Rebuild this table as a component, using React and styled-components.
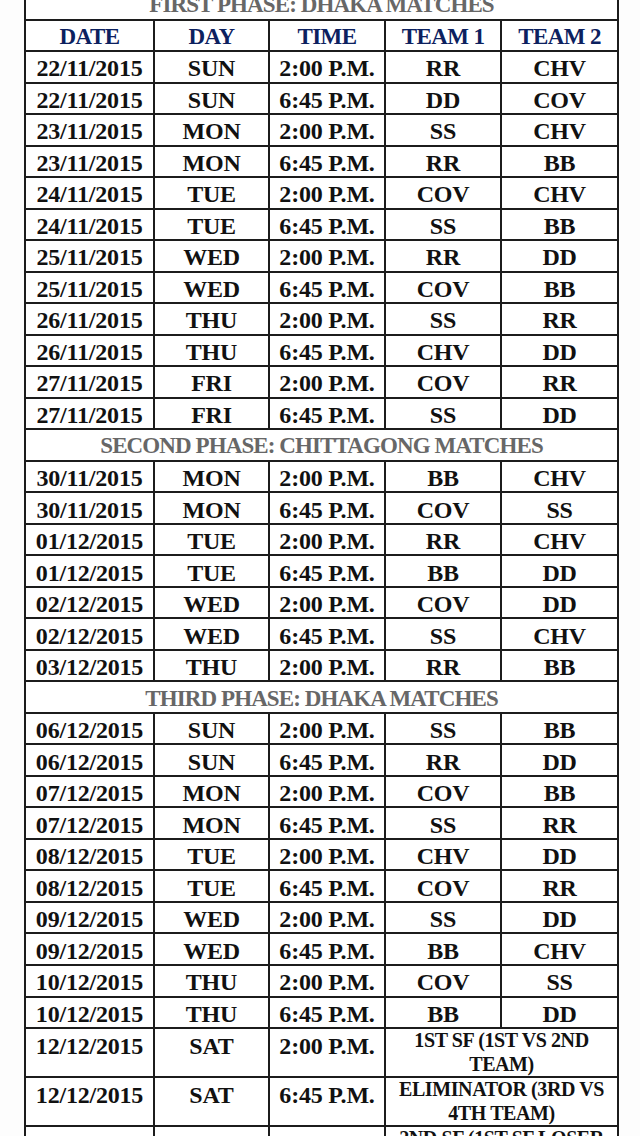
import React from "react";
import styled, { createGlobalStyle } from "styled-components";

const GlobalStyle = createGlobalStyle`
	html, body {
		margin: 0;
		padding: 0;
		background: #ffffff;
	}
	body {
		overflow: hidden;
		height: 1136px;
	}
`;

export const Page = styled.div`
	width: 640px;
	height: 1136px;
	overflow: hidden;
	background: #fdfdfd;
	padding-left: 24px;
	box-sizing: border-box;
`;

export const Schedule = styled.table`
	margin-top: -13px;
	width: 593px;
	table-layout: fixed;
	border-collapse: collapse;
	font-family: "Liberation Serif", "Times New Roman", serif;
	font-weight: 700;
	background: #ffffff;
`;

export const Row = styled.tr`
	height: ${(props) => (props.tall ? "49px" : "31.52px")};
`;

export const PhaseCell = styled.td`
	border: 2px solid #1c1c1c;
	text-align: center;
	color: #676767;
	font-size: 23px;
	line-height: 1;
	padding: 2px 0 0;
	letter-spacing: -0.9px;
	white-space: nowrap;
`;

export const HeadCell = styled.th`
	border: 2px solid #1c1c1c;
	text-align: center;
	color: #0c215f;
	font-size: 23px;
	line-height: 1;
	padding: 3px 0 0;
	font-weight: 700;
	letter-spacing: -0.6px;
`;

export const Cell = styled.td`
	border: 2px solid #1c1c1c;
	text-align: center;
	vertical-align: ${(props) => (props.top ? "top" : "middle")};
	color: #111111;
	font-size: 24px;
	line-height: 1;
	padding: ${(props) => (props.top ? "5px 0 0" : "3px 0 0")};
	letter-spacing: -0.2px;
	white-space: nowrap;
`;

export const FinalCell = styled.td`
	border: 2px solid #1c1c1c;
	text-align: center;
	vertical-align: top;
	color: #111111;
	font-size: 20px;
	line-height: 23.5px;
	padding: 0 8px;
	letter-spacing: -0.4px;
	overflow: hidden;
`;

const phases = [
	{
		title: "FIRST PHASE: DHAKA MATCHES",
		head: true,
		games: [
			["22/11/2015", "SUN", "2:00 P.M.", "RR", "CHV"],
			["22/11/2015", "SUN", "6:45 P.M.", "DD", "COV"],
			["23/11/2015", "MON", "2:00 P.M.", "SS", "CHV"],
			["23/11/2015", "MON", "6:45 P.M.", "RR", "BB"],
			["24/11/2015", "TUE", "2:00 P.M.", "COV", "CHV"],
			["24/11/2015", "TUE", "6:45 P.M.", "SS", "BB"],
			["25/11/2015", "WED", "2:00 P.M.", "RR", "DD"],
			["25/11/2015", "WED", "6:45 P.M.", "COV", "BB"],
			["26/11/2015", "THU", "2:00 P.M.", "SS", "RR"],
			["26/11/2015", "THU", "6:45 P.M.", "CHV", "DD"],
			["27/11/2015", "FRI", "2:00 P.M.", "COV", "RR"],
			["27/11/2015", "FRI", "6:45 P.M.", "SS", "DD"],
		],
	},
	{
		title: "SECOND PHASE: CHITTAGONG MATCHES",
		games: [
			["30/11/2015", "MON", "2:00 P.M.", "BB", "CHV"],
			["30/11/2015", "MON", "6:45 P.M.", "COV", "SS"],
			["01/12/2015", "TUE", "2:00 P.M.", "RR", "CHV"],
			["01/12/2015", "TUE", "6:45 P.M.", "BB", "DD"],
			["02/12/2015", "WED", "2:00 P.M.", "COV", "DD"],
			["02/12/2015", "WED", "6:45 P.M.", "SS", "CHV"],
			["03/12/2015", "THU", "2:00 P.M.", "RR", "BB"],
		],
	},
	{
		title: "THIRD PHASE: DHAKA MATCHES",
		games: [
			["06/12/2015", "SUN", "2:00 P.M.", "SS", "BB"],
			["06/12/2015", "SUN", "6:45 P.M.", "RR", "DD"],
			["07/12/2015", "MON", "2:00 P.M.", "COV", "BB"],
			["07/12/2015", "MON", "6:45 P.M.", "SS", "RR"],
			["08/12/2015", "TUE", "2:00 P.M.", "CHV", "DD"],
			["08/12/2015", "TUE", "6:45 P.M.", "COV", "RR"],
			["09/12/2015", "WED", "2:00 P.M.", "SS", "DD"],
			["09/12/2015", "WED", "6:45 P.M.", "BB", "CHV"],
			["10/12/2015", "THU", "2:00 P.M.", "COV", "SS"],
			["10/12/2015", "THU", "6:45 P.M.", "BB", "DD"],
			["12/12/2015", "SAT", "2:00 P.M.", "1ST SF (1ST VS 2ND TEAM)"],
			["12/12/2015", "SAT", "6:45 P.M.", "ELIMINATOR (3RD VS 4TH TEAM)"],
			["13/12/2015", "SUN", "6:45 P.M.", "2ND SF (1ST SF LOSER VS ELIMINATOR WINNER)"],
		],
	},
];

const columns = ["DATE", "DAY", "TIME", "TEAM 1", "TEAM 2"];

const App = () => {
	return (
		<Page>
			<GlobalStyle />
			<Schedule>
				<colgroup>
					<col style={{ width: "129px" }} />
					<col style={{ width: "115px" }} />
					<col style={{ width: "116px" }} />
					<col style={{ width: "116px" }} />
					<col style={{ width: "117px" }} />
				</colgroup>
				<tbody>
					{phases.map((phase) => (
						<React.Fragment key={phase.title}>
							<Row>
								<PhaseCell colSpan={5}>{phase.title}</PhaseCell>
							</Row>
							{phase.head && (
								<Row>
									{columns.map((c) => (
										<HeadCell key={c}>{c}</HeadCell>
									))}
								</Row>
							)}
							{phase.games.map((g, i) =>
								g.length === 4 ? (
									<Row tall key={i}>
										<Cell top>{g[0]}</Cell>
										<Cell top>{g[1]}</Cell>
										<Cell top>{g[2]}</Cell>
										<FinalCell colSpan={2}>{g[3]}</FinalCell>
									</Row>
								) : (
									<Row key={i}>
										{g.map((v, j) => (
											<Cell key={j}>{v}</Cell>
										))}
									</Row>
								)
							)}
						</React.Fragment>
					))}
				</tbody>
			</Schedule>
		</Page>
	);
};

export default App;
